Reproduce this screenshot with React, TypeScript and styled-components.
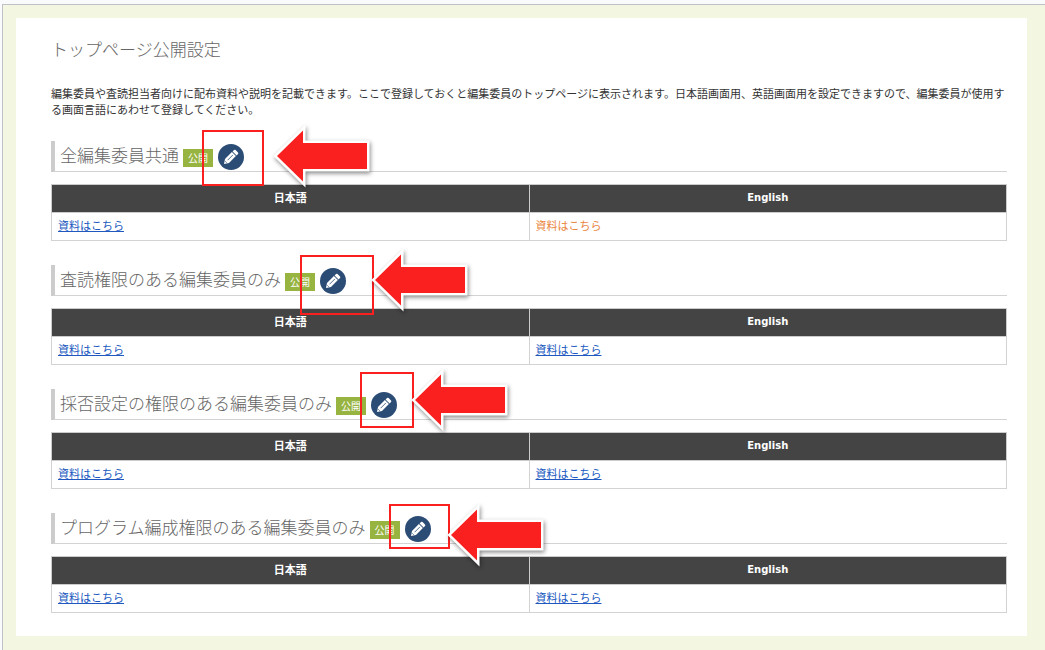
import React from "react";
import styled, { createGlobalStyle } from "styled-components";

const GlobalStyle = createGlobalStyle`
  body {
    margin: 0;
    background: #f9fafc;
    color: #333;
    font-family: "Noto Sans CJK JP", sans-serif;
    font-size: 11px;
    line-height: 16px;
  }
`;

const Page = styled.div`
  box-sizing: border-box;
  min-height: calc(100vh - 4px);
  margin: 4px 0 0 2px;
  padding: 13px 18px 13px 13px;
  border-top: 1px solid #bfc1c6;
  border-left: 1px solid #bfc1c6;
  background: #f3f7e2;
`;

const Card = styled.main`
  padding: 19px 20px 23px 35px;
  background: #fff;
`;

const Title = styled.h1`
  margin: 0 0 24px;
  color: #666;
  font-size: 17px;
  font-weight: 300;
  line-height: 24px;
`;

const Lead = styled.p`
  margin: 0 0 24px;
`;

const Sections = styled.div`
  display: flex;
  flex-direction: column;
  gap: 24px;
`;

const Section = styled.section`
  position: relative;
`;

const SectionHead = styled.header`
  display: flex;
  align-items: center;
  height: 30px;
  margin-bottom: 12px;
  padding-left: 5px;
  border-left: 4px solid #ccc;
  border-bottom: 1px solid #d3d3d3;
`;

const SectionTitle = styled.h2`
  margin: 0 4px 0 0;
  color: #666;
  font-size: 17px;
  font-weight: 300;
  line-height: 26px;
  padding-bottom: 2px;
`;

const Badge = styled.span`
  margin: 3px 5px 0 0;
  padding: 0 5px;
  background: #97b340;
  color: #fff;
  font-size: 10px;
  line-height: 18px;
`;

const EditButton = styled.button`
  display: flex;
  align-items: center;
  justify-content: center;
  width: 26px;
  height: 26px;
  margin: 2px 0 0;
  padding: 0;
  border: 0;
  border-radius: 50%;
  background: #2b4c75;
  cursor: pointer;
`;

const Table = styled.table`
  width: 100%;
  border-collapse: collapse;
  table-layout: fixed;
  font-family: "Noto Sans", "Noto Sans CJK JP", sans-serif;
`;

const HeadCell = styled.th<{ $latin?: boolean }>`
  height: 25px;
  padding: 0 6px 2px;
  border: 1px solid #ccc;
  background: #444;
  color: #fff;
  font-family: ${(p) => (p.$latin ? '"DejaVu Sans"' : '"Noto Sans", "Noto Sans CJK JP"')}, sans-serif;
  font-size: ${(p) => (p.$latin ? 10 : 11)}px;
  font-weight: 700;
  text-align: center;
`;

const Cell = styled.td`
  height: 25px;
  padding: 0 6px 2px;
  border: 1px solid #d3d3d3;
`;

const DocLink = styled.a<{ $active?: boolean }>`
  color: ${(p) => (p.$active ? "#ea8540" : "#2058c0")};
  text-decoration: ${(p) => (p.$active ? "none" : "underline")};
`;

const Highlight = styled.div<{ $x: number; $y: number; $w: number; $h: number }>`
  position: absolute;
  left: ${(p) => p.$x}px;
  top: ${(p) => p.$y}px;
  box-sizing: border-box;
  width: ${(p) => p.$w}px;
  height: ${(p) => p.$h}px;
  border: 2px solid #fa2020;
  pointer-events: none;
`;

const ArrowSvg = styled.svg<{ $x: number; $y: number }>`
  position: absolute;
  left: ${(p) => p.$x}px;
  top: ${(p) => p.$y}px;
  overflow: visible;
  filter: drop-shadow(1px 2px 2px rgba(0, 0, 0, 0.45));
  pointer-events: none;
`;

function Pencil() {
  return (
    <svg width="16" height="16" viewBox="0 0 16 16" aria-hidden="true">
      <path
        d="M1 15 2 10 8.9 3.1 12.9 7.1 6 14Z M9.6 2.4 11 1Q11.8.3 12.6 1L15 3.4Q15.7 4.2 15 5L13.6 6.4Z"
        fill="#fff"
      />
      <path d="M4.6 11.2 9.9 5.9M2.3 12.3 3.7 13.7" stroke="#2b4c75" strokeWidth="0.8" />
    </svg>
  );
}

function Arrow({ x, y }: { x: number; y: number }) {
  return (
    <ArrowSvg $x={x} $y={y} width="100" height="64" viewBox="0 0 100 64" aria-hidden="true">
      <path
        d="M6 32 32 6.5V19H96V45H32V57.5Z"
        fill="#fa2020"
        stroke="#fff"
        strokeWidth="5"
        paintOrder="stroke"
      />
    </ArrowSvg>
  );
}

type Group = {
  title: string;
  englishActive?: boolean;
  box: [number, number, number, number];
  arrow: [number, number];
};

const groups: Group[] = [
  { title: "全編集委員共通", englishActive: true, box: [151, -11, 62, 56], arrow: [220, -17] },
  { title: "査読権限のある編集委員のみ", box: [249, -10, 74, 60], arrow: [318, -17] },
  { title: "採否設定の権限のある編集委員のみ", box: [309, -17, 54, 56], arrow: [358, -21] },
  { title: "プログラム編成権限のある編集委員のみ", box: [338, -9, 61, 45], arrow: [394, -10] },
];

export default function App() {
  return (
    <>
      <GlobalStyle />
      <Page lang="ja">
        <Card>
          <Title>トップページ公開設定</Title>
          <Lead>
            編集委員や査読担当者向けに配布資料や説明を記載できます。ここで登録しておくと編集委員のトップページに表示されます。日本語画面用、英語画面用を設定できますので、編集委員が使用する画面言語にあわせて登録してください。
          </Lead>
          <Sections>
            {groups.map(({ title, englishActive, box, arrow }) => (
              <Section key={title}>
                <SectionHead>
                  <SectionTitle>{title}</SectionTitle>
                  <Badge>公開</Badge>
                  <EditButton type="button" aria-label={`${title}を編集`}>
                    <Pencil />
                  </EditButton>
                </SectionHead>
                <Table>
                  <thead>
                    <tr>
                      <HeadCell scope="col">日本語</HeadCell>
                      <HeadCell scope="col" $latin>
                        English
                      </HeadCell>
                    </tr>
                  </thead>
                  <tbody>
                    <tr>
                      <Cell>
                        <DocLink href="#ja">資料はこちら</DocLink>
                      </Cell>
                      <Cell>
                        <DocLink href="#en" $active={englishActive}>
                          資料はこちら
                        </DocLink>
                      </Cell>
                    </tr>
                  </tbody>
                </Table>
                <Highlight $x={box[0]} $y={box[1]} $w={box[2]} $h={box[3]} />
                <Arrow x={arrow[0]} y={arrow[1]} />
              </Section>
            ))}
          </Sections>
        </Card>
      </Page>
    </>
  );
}
